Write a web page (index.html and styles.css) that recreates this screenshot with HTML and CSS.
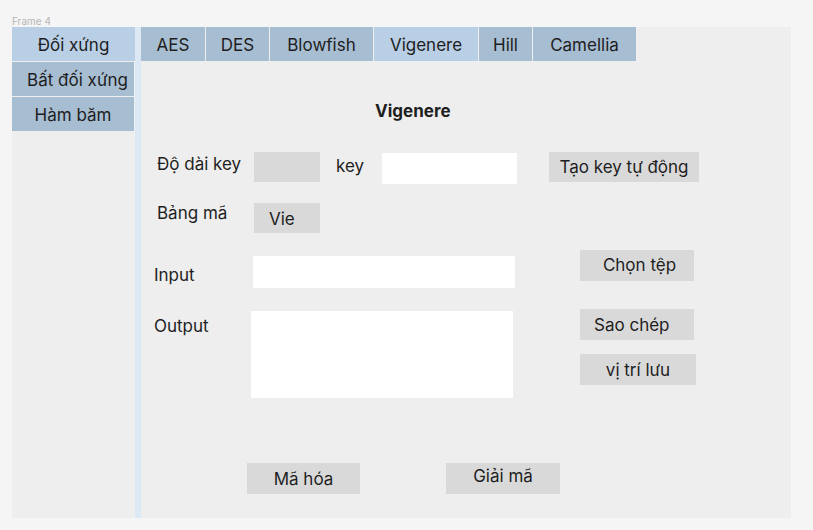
FILE: index.html
```html
<!DOCTYPE html>
<html lang="vi">
<head>
<meta charset="utf-8">
<title>Frame 4</title>
<link rel="stylesheet" href="styles.css">
</head>
<body>
<div class="page">
  <div class="frame-label">Frame 4</div>
  <div class="frame">
    <nav class="sidebar">
      <div class="side-item active">Đối xứng</div>
      <div class="side-item narrow shift">Bất đối xứng</div>
      <div class="side-item narrow">Hàm băm</div>
    </nav>
    <div class="strip"></div>
    <main class="main">
      <div class="tabs">
        <div class="tab w-aes">AES</div>
        <div class="tab w-des">DES</div>
        <div class="tab w-blow">Blowfish</div>
        <div class="tab w-vig active">Vigenere</div>
        <div class="tab w-hill">Hill</div>
        <div class="tab w-cam">Camellia</div>
      </div>

      <h1 class="title">Vigenere</h1>

      <div class="row row-a">
        <span class="label lbl-len">Độ dài key</span>
        <div class="box box-len"></div>
        <span class="label lbl-key">key</span>
        <div class="field field-key"></div>
        <div class="btn btn-gen">Tạo key tự động</div>
      </div>

      <div class="row row-b">
        <span class="label lbl-table">Bảng mã</span>
        <div class="box box-vie">Vie</div>
      </div>

      <div class="row row-c">
        <span class="label lbl-input">Input</span>
        <div class="field field-input"></div>
        <div class="btn btn-file">Chọn tệp</div>
      </div>

      <div class="row row-d">
        <span class="label lbl-output">Output</span>
        <div class="field field-output"></div>
        <div class="side-btns">
          <div class="btn btn-copy">Sao chép</div>
          <div class="btn btn-save">vị trí lưu</div>
        </div>
      </div>

      <div class="row row-e">
        <div class="btn btn-enc">Mã hóa</div>
        <div class="btn btn-dec">Giải mã</div>
      </div>
    </main>
  </div>
</div>
</body>
</html>
```

FILE: styles.css
```css
* { box-sizing: border-box; }

html, body {
  margin: 0;
  padding: 0;
  background: #f5f5f5;
}

body {
  font-family: Inter, "Noto Sans", "DejaVu Sans", sans-serif;
  font-size: 17px;
  color: #1e1e1e;
}

.page {
  padding-left: 12px;
}

.frame-label {
  height: 27px;
  padding-top: 15px;
  font-size: 10px;
  line-height: 12px;
  color: #b5b5b5;
}

.frame {
  display: flex;
  width: 779px;
  height: 491px;
  background: #eeeeee;
}

/* Sidebar */
.sidebar {
  width: 123px;
  display: flex;
  flex-direction: column;
  gap: 1px;
}

.side-item {
  height: 34px;
  display: flex;
  align-items: center;
  justify-content: center;
  padding-top: 2px;
  background: #a7bdd2;
  white-space: nowrap;
}

.side-item.narrow { width: 122px; }
.side-item.active { background: #b8cfe6; }
.side-item.shift { padding-left: 9px; }

.strip {
  width: 6px;
  background: #dce9f5;
}

/* Main */
.main {
  width: 650px;
  display: flex;
  flex-direction: column;
}

.tabs {
  display: flex;
  gap: 1px;
  height: 34px;
}

.tab {
  display: flex;
  align-items: center;
  justify-content: center;
  padding-top: 2px;
  background: #a7bdd2;
  white-space: nowrap;
}

.tab.active { background: #b8cfe6; }
.w-aes { width: 64px; }
.w-des { width: 63px; }
.w-blow { width: 103px; }
.w-vig { width: 104px; }
.w-hill { width: 53px; }
.w-cam { width: 103px; }

.title {
  margin: 41px 0 0 234px;
  height: 19px;
  font-size: 17px;
  line-height: 19px;
  font-weight: 700;
}

.row {
  display: flex;
  align-items: flex-start;
}

.label {
  line-height: 20px;
  white-space: nowrap;
}

.box {
  background: #d9d9d9;
}

.field {
  background: #ffffff;
}

.btn {
  display: flex;
  align-items: center;
  justify-content: center;
  background: #d9d9d9;
  white-space: nowrap;
}

/* Row A */
.row-a { margin-top: 30px; height: 33px; }
.lbl-len { margin: 3px 0 0 16px; width: 97px; }
.box-len { width: 66px; height: 30px; margin-top: 1px; }
.lbl-key { margin: 5px 0 0 16px; width: 46px; }
.field-key { width: 135px; height: 31px; margin-top: 2px; }
.btn-gen { width: 150px; height: 30px; margin: 1px 0 0 32px; }

/* Row B */
.row-b { margin-top: 19px; height: 30px; }
.lbl-table { margin: 0 0 0 16px; width: 97px; }
.box-vie {
  width: 66px;
  height: 30px;
  padding-left: 15px;
  padding-top: 1px;
  display: flex;
  align-items: center;
}

/* Row C */
.row-c { margin-top: 17px; height: 38px; }
.lbl-input { margin: 15px 0 0 13px; width: 99px; }
.field-input { width: 262px; height: 32px; margin-top: 6px; }
.btn-file { width: 114px; height: 31px; margin-left: 65px; padding-left: 5px; padding-bottom: 2px; }

/* Row D */
.row-d { margin-top: 21px; height: 89px; }
.lbl-output { margin: 7px 0 0 13px; width: 97px; }
.field-output { width: 262px; height: 87px; margin-top: 2px; }
.side-btns {
  display: flex;
  flex-direction: column;
  gap: 14px;
  margin-left: 67px;
}
.btn-copy { width: 114px; height: 31px; justify-content: flex-start; padding-left: 14px; }
.btn-save { width: 116px; height: 31px; }

/* Row E */
.row-e { margin-top: 65px; }
.btn-enc { width: 113px; height: 31px; margin-left: 106px; padding-top: 1px; }
.btn-dec { width: 114px; height: 31px; margin-left: 86px; padding-bottom: 5px; }
```
